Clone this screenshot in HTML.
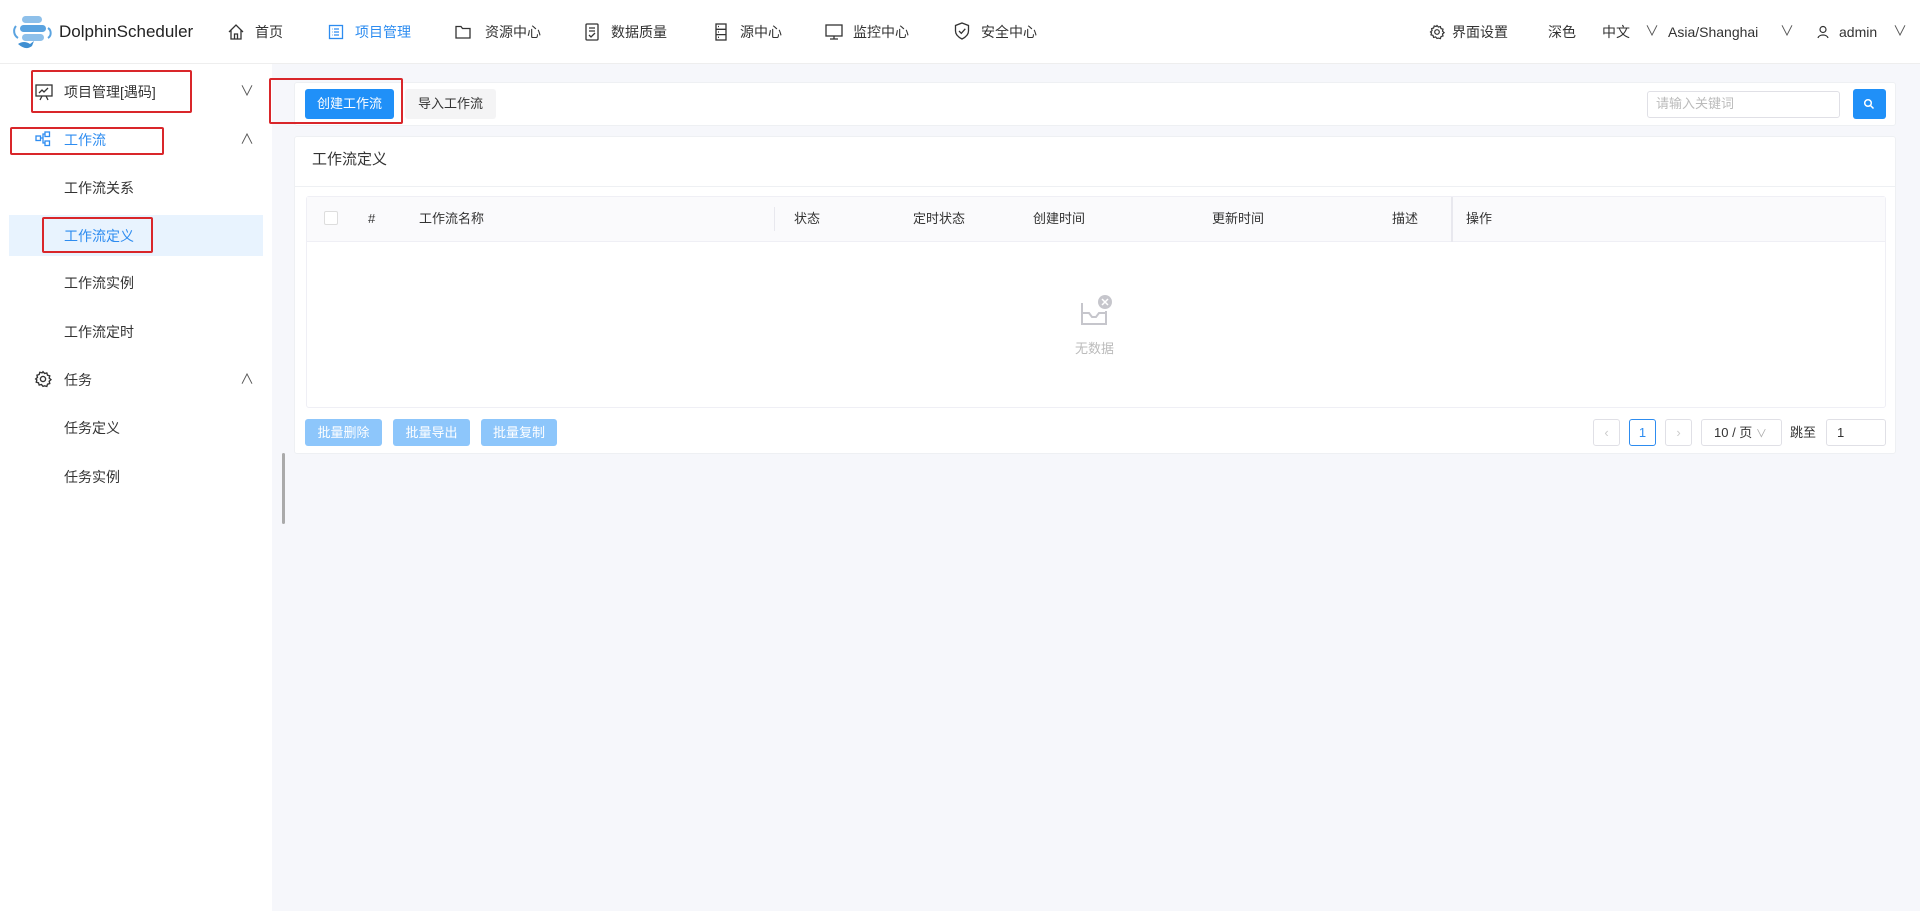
<!DOCTYPE html>
<html><head><meta charset="utf-8">
<style>
*{box-sizing:border-box;margin:0;padding:0}
body{width:1920px;height:911px;overflow:hidden;background:#f6f7fb;font-family:"Liberation Sans","Noto Sans CJK SC",sans-serif;font-size:14px;color:#333;position:relative}
.a{position:absolute}
.hdr{left:0;top:0;width:1920px;height:64px;background:#fff;border-bottom:1px solid #eee}
.t{position:absolute;white-space:nowrap;line-height:20px}
.side{left:0;top:64px;width:272px;height:847px;background:#fff}
.red{position:absolute;border:2px solid #d9262a;border-radius:2px}
.card{background:#fff;border:1px solid #eef0f3;border-radius:3px}
svg{position:absolute}
.btn{position:absolute;border-radius:3px;color:#fff;text-align:center;line-height:27px;font-size:13px}
.pg{position:absolute;top:419px;height:27px;border:1px solid #e0e0e6;border-radius:3px;background:#fff;text-align:center;line-height:25px;font-size:13px}
</style></head><body>
<div class="a hdr">
  <svg style="left:12px;top:14px" width="44" height="38" viewBox="0 0 44 38">
    <rect x="10" y="2" width="20" height="7" rx="3.5" fill="#8ec0ea"/>
    <rect x="8" y="11" width="26" height="7" rx="3.5" fill="#5aa3e0"/>
    <rect x="10" y="20" width="22" height="7" rx="3.5" fill="#8ec0ea"/>
    <path d="M4 12 A8 8 0 0 0 6 24" stroke="#5aa3e0" stroke-width="2" fill="none"/>
    <path d="M36 14 A6 6 0 0 1 36 24" stroke="#5aa3e0" stroke-width="2" fill="none"/>
    <path d="M6 30 q6 -4 12 0 l4 -3 l-2 5 q-6 5 -14 -2z" fill="#3f8fd2"/>
  </svg>
  <div class="t" style="left:59px;top:22px;font-size:17px;color:#222">DolphinScheduler</div>
  <svg style="left:227px;top:23px" width="18" height="18" viewBox="0 0 18 18" fill="none" stroke="#333" stroke-width="1.3"><path d="M2 9 L9 2 L16 9 M4 7 V16 H14 V7 M7.5 16 V11 H10.5 V16"/></svg>
  <div class="t" style="left:255px;top:22px">首页</div>
  <svg style="left:327px;top:23px" width="18" height="18" viewBox="0 0 18 18" fill="none" stroke="#2d8cf0" stroke-width="1.3"><rect x="2.5" y="2.5" width="13" height="13"/><path d="M7 6h5M7 9h5M7 12h5M5 6h.5M5 9h.5M5 12h.5"/></svg>
  <div class="t" style="left:355px;top:22px;color:#2d8cf0">项目管理</div>
  <svg style="left:454px;top:23px" width="18" height="18" viewBox="0 0 18 18" fill="none" stroke="#333" stroke-width="1.3"><path d="M2 3.5 H7 L8.5 5.5 H16 V15 H2 Z"/></svg>
  <div class="t" style="left:485px;top:22px">资源中心</div>
  <svg style="left:583px;top:22px" width="18" height="20" viewBox="0 0 18 20" fill="none" stroke="#333" stroke-width="1.3"><rect x="3" y="2" width="12" height="16" rx="1"/><path d="M6 6h6M6 9h6M6 13l2 2 4-4"/></svg>
  <div class="t" style="left:611px;top:22px">数据质量</div>
  <svg style="left:712px;top:22px" width="18" height="20" viewBox="0 0 18 20" fill="none" stroke="#333" stroke-width="1.3"><rect x="4" y="2" width="10" height="16"/><path d="M4 7.3h10M4 12.6h10M6 4.5h1M6 10h1M6 15.3h1"/></svg>
  <div class="t" style="left:740px;top:22px">源中心</div>
  <svg style="left:824px;top:22px" width="20" height="20" viewBox="0 0 20 20" fill="none" stroke="#333" stroke-width="1.3"><rect x="2" y="3" width="16" height="11"/><path d="M10 14v3M6 17h8"/></svg>
  <div class="t" style="left:853px;top:22px">监控中心</div>
  <svg style="left:953px;top:21px" width="18" height="20" viewBox="0 0 18 20" fill="none" stroke="#333" stroke-width="1.3"><path d="M9 2 L15.5 4.5 V10 C15.5 14 12 16.5 9 18 C6 16.5 2.5 14 2.5 10 V4.5 Z M6 10 L8.3 12.3 L12.3 7.8"/></svg>
  <div class="t" style="left:981px;top:22px">安全中心</div>

  <svg style="left:1429px;top:24px" width="16" height="16" viewBox="0 0 16 16" fill="none" stroke="#333" stroke-width="1.2"><circle cx="8" cy="8" r="2.3"/><path d="M8 1.5l1.4 1.6 2-.5.6 2 2 .6-.5 2 1.6 1.4-1.6 1.4.5 2-2 .6-.6 2-2-.5L8 14.5l-1.4-1.6-2 .5-.6-2-2-.6.5-2L1.5 8l1.6-1.4-.5-2 2-.6.6-2 2 .5z"/></svg>
  <div class="t" style="left:1452px;top:22px">界面设置</div>
  <div class="t" style="left:1548px;top:22px">深色</div>
  <div class="t" style="left:1602px;top:22px">中文</div>
  <div class="t" style="left:1645px;top:21px;color:#555">∨</div>
  <div class="t" style="left:1668px;top:22px">Asia/Shanghai</div>
  <div class="t" style="left:1780px;top:21px;color:#555">∨</div>
  <svg style="left:1816px;top:25px" width="14" height="14" viewBox="0 0 14 14" fill="none" stroke="#333" stroke-width="1.2"><circle cx="7" cy="4.5" r="3"/><path d="M2 13 C3 9 11 9 12 13"/></svg>
  <div class="t" style="left:1839px;top:22px">admin</div>
  <div class="t" style="left:1893px;top:21px;color:#555">∨</div>
</div>

<div class="a side">
  <svg style="left:34px;top:18px" width="20" height="20" viewBox="0 0 20 20" fill="none" stroke="#333" stroke-width="1.3"><rect x="2" y="3" width="16" height="11"/><path d="M5 11l3-3 2 2 4-4M8 14l-2 4M12 14l2 4"/></svg>
  <div class="t" style="left:64px;top:18px">项目管理[遇码]</div>
  <div class="t" style="left:240px;top:17px;color:#555">∨</div>
  <div class="red" style="left:31px;top:6px;width:161px;height:43px"></div>

  <svg style="left:35px;top:67px" width="16" height="16" viewBox="0 0 16 16" fill="none" stroke="#2d8cf0" stroke-width="1.3"><rect x="1" y="5" width="4.5" height="4.5"/><rect x="10" y="1" width="4.5" height="4.5"/><rect x="10" y="10" width="4.5" height="4.5"/><path d="M5.5 7h2.5v-4h2M8 7v5h2"/></svg>
  <div class="t" style="left:64px;top:66px;color:#2d8cf0">工作流</div>
  <div class="t" style="left:240px;top:64px;color:#555;transform:rotate(180deg)">∨</div>
  <div class="red" style="left:10px;top:63px;width:154px;height:28px"></div>

  <div class="t" style="left:64px;top:114px">工作流关系</div>
  <div class="a" style="left:9px;top:151px;width:254px;height:41px;background:#e8f3fe"></div>
  <div class="t" style="left:64px;top:162px;color:#2d8cf0">工作流定义</div>
  <div class="red" style="left:42px;top:153px;width:111px;height:36px"></div>
  <div class="t" style="left:64px;top:209px">工作流实例</div>
  <div class="t" style="left:64px;top:258px">工作流定时</div>
  <svg style="left:34px;top:306px" width="18" height="18" viewBox="0 0 16 16" fill="none" stroke="#333" stroke-width="1.2"><circle cx="8" cy="8" r="2.3"/><path d="M8 1.5l1.4 1.6 2-.5.6 2 2 .6-.5 2 1.6 1.4-1.6 1.4.5 2-2 .6-.6 2-2-.5L8 14.5l-1.4-1.6-2 .5-.6-2-2-.6.5-2L1.5 8l1.6-1.4-.5-2 2-.6.6-2 2 .5z"/></svg>
  <div class="t" style="left:64px;top:306px">任务</div>
  <div class="t" style="left:240px;top:304px;color:#555;transform:rotate(180deg)">∨</div>
  <div class="t" style="left:64px;top:354px">任务定义</div>
  <div class="t" style="left:64px;top:403px">任务实例</div>
</div>
<div class="a" style="left:282px;top:453px;width:3px;height:71px;background:#aaa;border-radius:2px"></div>

<div class="a card" style="left:294px;top:82px;width:1602px;height:44px"></div>
<div class="red" style="left:269px;top:78px;width:134px;height:46px"></div>
<div class="btn" style="left:305px;top:89px;width:89px;height:30px;line-height:30px;background:#2090f8">创建工作流</div>
<div class="btn" style="left:405px;top:89px;width:91px;height:30px;line-height:30px;background:#f4f4f5;color:#333">导入工作流</div>
<div class="a" style="left:1647px;top:91px;width:193px;height:27px;border:1px solid #e0e0e6;border-radius:3px;background:#fff"></div>
<div class="t" style="left:1656px;top:94px;color:#bbb;font-size:13px">请输入关键词</div>
<div class="a" style="left:1853px;top:89px;width:33px;height:30px;background:#2090f8;border-radius:3px"></div>
<svg style="left:1863px;top:98px" width="12" height="12" viewBox="0 0 12 12" fill="none" stroke="#fff" stroke-width="1.5"><circle cx="5" cy="5" r="3.3"/><path d="M7.5 7.5l3 3"/></svg>

<div class="a card" style="left:294px;top:136px;width:1602px;height:318px"></div>
<div class="t" style="left:312px;top:150px;font-size:15px">工作流定义</div>
<div class="a" style="left:295px;top:186px;width:1600px;height:1px;background:#eef0f3"></div>
<div class="a" style="left:306px;top:196px;width:1580px;height:212px;border:1px solid #efeff5;border-radius:3px;background:#fff"></div>
<div class="a" style="left:307px;top:197px;width:1578px;height:45px;background:#fafafc;border-bottom:1px solid #efeff5"></div>
<div class="a" style="left:324px;top:211px;width:14px;height:14px;border:1px solid #ddd;border-radius:2px;background:#fff"></div>
<div class="t" style="left:368px;top:209px;font-size:13px">#</div>
<div class="t" style="left:419px;top:209px;font-size:13px">工作流名称</div>
<div class="a" style="left:774px;top:207px;width:1px;height:24px;background:#e8e8ee"></div>
<div class="t" style="left:794px;top:209px;font-size:13px">状态</div>
<div class="t" style="left:913px;top:209px;font-size:13px">定时状态</div>
<div class="t" style="left:1033px;top:209px;font-size:13px">创建时间</div>
<div class="t" style="left:1212px;top:209px;font-size:13px">更新时间</div>
<div class="t" style="left:1392px;top:209px;font-size:13px">描述</div>
<div class="a" style="left:1451px;top:197px;width:2px;height:45px;background:#e8e8ee"></div>
<div class="t" style="left:1466px;top:209px;font-size:13px">操作</div>
<svg style="left:1078px;top:293px" width="36" height="36" viewBox="0 0 36 36" fill="none" stroke="#c6c6cc" stroke-width="2"><path d="M4 10 V31 H28 V18 M4 20 H11 L14 24 H18 L21 20 H28"/><circle cx="27" cy="9" r="7" fill="#c6c6cc" stroke="none"/><path d="M24 6l6 6M30 6l-6 6" stroke="#fff" stroke-width="1.5"/></svg>
<div class="t" style="left:1075px;top:339px;color:#bbb;font-size:13px">无数据</div>

<div class="btn" style="left:305px;top:419px;width:77px;background:#8dc6fb">批量删除</div>
<div class="btn" style="left:393px;top:419px;width:77px;background:#8dc6fb">批量导出</div>
<div class="btn" style="left:481px;top:419px;width:76px;background:#8dc6fb">批量复制</div>
<div class="pg" style="left:1593px;width:27px;color:#ccc">‹</div>
<div class="pg" style="left:1629px;width:27px;border-color:#2d8cf0;color:#2d8cf0">1</div>
<div class="pg" style="left:1665px;width:27px;color:#ccc">›</div>
<div class="pg" style="left:1701px;width:81px;text-align:left;padding-left:12px">10 / 页 <span style="color:#aaa;font-size:11px">∨</span></div>
<div class="t" style="left:1790px;top:423px;font-size:13px">跳至</div>
<div class="pg" style="left:1826px;width:60px;text-align:left;padding-left:10px">1</div>
</body></html>
